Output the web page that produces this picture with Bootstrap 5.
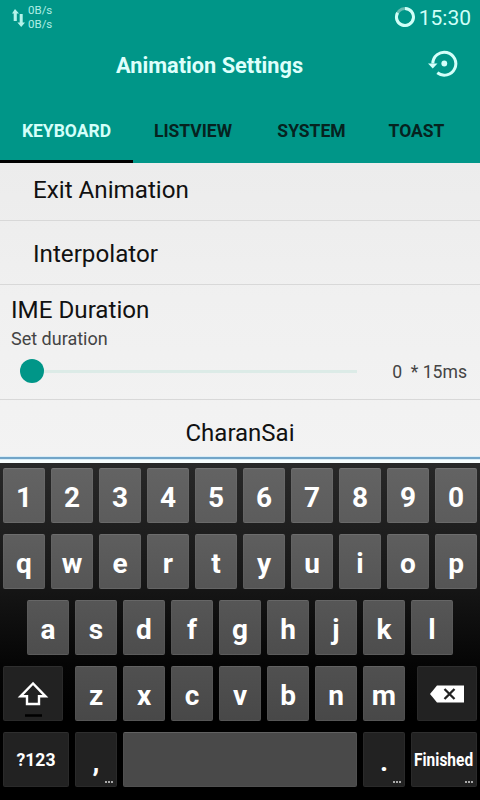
<!DOCTYPE html>
<html lang="en">
<head>
<meta charset="utf-8">
<meta name="viewport" content="width=device-width, initial-scale=1">
<title>Animation Settings</title>
<link rel="stylesheet" href="https://cdn.jsdelivr.net/npm/bootstrap@5.3.0/dist/css/bootstrap.min.css">
<style>
body{width:480px;height:800px;font-family:Roboto,"Noto Sans",sans-serif;color:#111;background:#000;line-height:1}
svg{display:block;flex:none}
.top{background:#009688;color:#d4fffa;height:163px}
.status{height:36px;padding:0 9px 0 11px}
.speed{font-size:11.5px;line-height:14px;color:#b0eee5;margin-left:3px;margin-top:-3px}
.clock{font-size:21px;color:#d0fff8;margin-left:3px;padding-top:1px}
.status .battery{margin-bottom:1px}
.titlebar{height:62px;padding:0 22px 0 116px}
.titlebar h1{font-size:21.75px;font-weight:700;margin-bottom:2px;color:#defffb}
.titlebar svg{margin-bottom:6px}
.tabs{height:65px}
.tabs .nav-link{padding:6px 0 0;height:65px;font-size:17.5px;font-weight:700;color:#06231f;border-radius:0;text-align:center;border-bottom:3px solid transparent}
.tabs .nav-link.active{color:#d4fffa;border-color:#000}
.w1{width:133px}.w2{width:120px}.w3{width:117px}.w4{width:93px}
.settings{height:300px;background:linear-gradient(#ececec,#f0f0f0 45%,#f3f3f3)}
.entry{font-size:24.2px;padding-left:33px;border-bottom:1px solid #d8d8d8}
.entry-exit{height:58px;padding-top:15px}
.entry-inter{height:64px;padding-top:21px}
.ime{height:115px;padding:13px 13px 0 11px;border-bottom:1px solid #d8d8d8}
.ime-name{font-size:24.2px}
.ime-note{font-size:18px;color:#444;margin-top:8px}
.seek{height:24px;margin-top:11px;color:#444;font-size:17.6px}
.knob{width:24px;height:24px;border-radius:50%;background:#009688;margin-left:9px}
.track{width:313px;height:3px;background:#dcebe7}
.owner{height:63px;font-size:24px;padding-top:21px;background:linear-gradient(#0000 56px,#d9edf7 56px,#d9edf7 57px,#72a5c8 57px,#72a5c8 59px,#d9edf7 59px,#d9edf7 60px,#f7fdfd 60px)}
.keyboard{height:337px;padding:5px 3px 0;gap:11px;background:linear-gradient(#282828,#171717 35%,#050505 60%,#000 75%)}
.keyrow{gap:6px;height:55px}
.key{width:42px;height:55px;border-radius:2px;color:#fff;font-weight:700;font-size:28px;border:1px solid #ffffff0a;border-top-color:#ffffff24;position:relative;padding-top:4px}
.key.num{padding-top:5px}
.r1 .key{background:linear-gradient(#636363,#5c5c5c)}
.r2 .key{background:linear-gradient(#5e5e5e,#555)}
.r3 .key{background:linear-gradient(#565656,#4d4d4d)}
.r4 .key{background:linear-gradient(#505050,#484848)}
.r5 .key{background:#494949}
.keyboard .key.dark{background:#222;border-top-color:#ffffff10}
.wide{width:60px}.mode{width:66px;font-size:17.6px;padding-top:2px}
.erase{padding-top:1px}
.shift{padding-top:9px}
.space{width:234px}
.finish span{transform:scaleX(.88);white-space:nowrap}
.more::after{content:"";position:absolute;right:3px;bottom:3px;width:8px;height:2px;background:repeating-linear-gradient(90deg,#aaa 0 2px,#222 2px 3px)}
</style>
<script src="https://cdn.jsdelivr.net/npm/bootstrap@5.3.0/dist/js/bootstrap.bundle.min.js"></script>
</head>
<body class="overflow-hidden">
<header class="top">
  <div class="status d-flex align-items-center">
    <svg width="14" height="20" viewBox="0 0 14 20" fill="#b5f3ea"><path d="M1 5.500 4 1l4 4.500H5.800V13H2.700V5.500zM8.700 6h3v8.500H14L10.200 19l-3.800-4.500h2.300z"/></svg>
    <div class="speed">0B/s<br>0B/s</div>
    <svg class="battery ms-auto" width="22" height="22" viewBox="0 0 22 22" fill="none" stroke-width="3"><circle cx="11" cy="10" r="8.500" stroke="#68bdb2"/><path d="M11 1.500A8.500 8.500 0 1 1 3.600 5.750" stroke="#d0fff8"/></svg>
    <span class="clock">15:30</span>
  </div>
  <div class="titlebar d-flex align-items-center justify-content-between">
    <h1>Animation Settings</h1>
    <svg width="30" height="28" viewBox="0 0 30 28" fill="none" stroke="#d4fffa"><path d="M4.800 13.500A11.500 11.500 0 1 1 9.300 22.800" stroke-width="3"/><path d="M0 13.500h9.500L4.750 18.500z" fill="#d4fffa" stroke="none"/><circle cx="16.300" cy="13.500" r="2.900" fill="#d4fffa" stroke="none"/></svg>
  </div>
  <nav class="tabs nav flex-nowrap">
    <a class="nav-link active w1" href="#"><span class="d-flex h-100 align-items-center justify-content-center">KEYBOARD</span></a>
    <a class="nav-link w2" href="#"><span class="d-flex h-100 align-items-center justify-content-center">LISTVIEW</span></a>
    <a class="nav-link w3" href="#"><span class="d-flex h-100 align-items-center justify-content-center">SYSTEM</span></a>
    <a class="nav-link w4" href="#"><span class="d-flex h-100 align-items-center justify-content-center">TOAST</span></a>
  </nav>
</header>
<main class="settings">
  <div class="entry entry-exit">Exit Animation</div>
  <div class="entry entry-inter">Interpolator</div>
  <div class="ime">
    <div class="ime-name">IME Duration</div>
    <div class="ime-note">Set duration</div>
    <div class="seek d-flex align-items-center">
      <div class="knob"></div><div class="track"></div>
      <span class="ms-auto text-nowrap pt-1">0 &nbsp;* 15ms</span>
    </div>
  </div>
  <div class="owner text-center">CharanSai</div>
</main>
<section class="keyboard d-flex flex-column">
  <div class="keyrow r1 d-flex" data-keys="1234567890"></div>
  <div class="keyrow r2 d-flex" data-keys="qwertyuiop"></div>
  <div class="keyrow r3 d-flex justify-content-center" data-keys="asdfghjkl"></div>
  <div class="keyrow r4 d-flex justify-content-between">
    <div class="key dark wide shift d-flex align-items-center justify-content-center">
      <svg width="32" height="38" viewBox="0 0 32 38" fill="none"><path d="M16 4.500 3.500 17.300H10V25h12v-7.700h6.500z" stroke="#fff" stroke-width="2.400"/><path d="M8 36.500h17" stroke="#000" stroke-width="2.500"/></svg>
    </div>
    <div class="keyrow d-flex" data-keys="zxcvbnm"></div>
    <div class="key dark wide erase d-flex align-items-center justify-content-center">
      <svg width="36" height="18" viewBox="0 0 36 18"><path d="M1 9 8 .500h27v17H8z" fill="#fff"/><path d="m15.500 4 10 10m0-10-10 10" stroke="#222" stroke-width="2.300"/></svg>
    </div>
  </div>
  <div class="keyrow r5 d-flex">
    <div class="key dark mode d-flex align-items-center justify-content-center">?123</div>
    <div class="key dark more d-flex align-items-center justify-content-center">,</div>
    <div class="key space"></div>
    <div class="key dark more d-flex align-items-center justify-content-center">.</div>
    <div class="key dark more mode finish d-flex align-items-center justify-content-center"><span>Finished</span></div>
  </div>
</section>
<script>
document.querySelectorAll('[data-keys]').forEach(row => {
  for (const c of row.dataset.keys) {
    const k = document.createElement('div');
    k.className = 'key d-flex align-items-center justify-content-center' + (/\d/.test(c) ? ' num' : '');
    k.textContent = c;
    row.append(k);
  }
});
</script>
</body>
</html>
